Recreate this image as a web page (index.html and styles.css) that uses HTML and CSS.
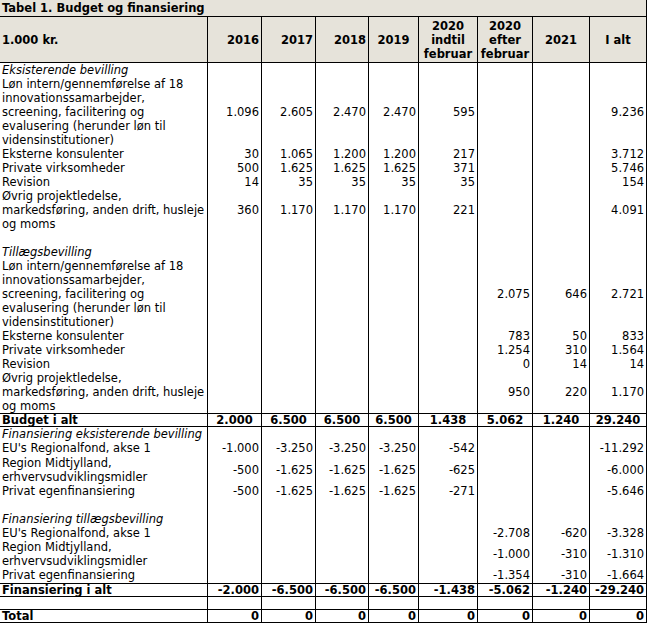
FILE: index.html
```html
<!DOCTYPE html>
<html lang="da">
<head>
<meta charset="utf-8">
<title>Tabel 1. Budget og finansiering</title>
<link rel="stylesheet" href="styles.css">
</head>
<body>
<table class="budget">
  <colgroup>
    <col class="w-label">
    <col class="w-54">
    <col class="w-54">
    <col class="w-53">
    <col class="w-50">
    <col class="w-59">
    <col class="w-55">
    <col class="w-57">
    <col class="w-57">
  </colgroup>
  <thead>
    <tr class="title-row">
      <th colspan="9" class="title">Tabel 1. Budget og finansiering</th>
    </tr>
    <tr class="head-row">
      <th class="lbl">1.000 kr.</th>
      <th class="r">2016</th>
      <th class="r">2017</th>
      <th class="r">2018</th>
      <th class="c">2019</th>
      <th class="c">2020<br>indtil<br>februar</th>
      <th class="c">2020<br>efter<br>februar</th>
      <th class="c">2021</th>
      <th class="c">I alt</th>
    </tr>
  </thead>
  <tbody>
    <tr>
      <td class="lbl it">Eksisterende bevilling</td>
      <td></td><td></td><td></td><td></td><td></td><td></td><td></td><td></td>
    </tr>
    <tr>
      <td class="lbl">Løn intern/gennemførelse af 18<br>innovationssamarbejder,<br>screening, facilitering og<br>evalusering (herunder løn til<br>vidensinstitutioner)</td>
      <td class="n">1.096</td><td class="n">2.605</td><td class="n">2.470</td><td class="n">2.470</td><td class="n">595</td><td></td><td></td><td class="n">9.236</td>
    </tr>
    <tr>
      <td class="lbl">Eksterne konsulenter</td>
      <td class="n">30</td><td class="n">1.065</td><td class="n">1.200</td><td class="n">1.200</td><td class="n">217</td><td></td><td></td><td class="n">3.712</td>
    </tr>
    <tr>
      <td class="lbl">Private virksomheder</td>
      <td class="n">500</td><td class="n">1.625</td><td class="n">1.625</td><td class="n">1.625</td><td class="n">371</td><td></td><td></td><td class="n">5.746</td>
    </tr>
    <tr>
      <td class="lbl">Revision</td>
      <td class="n">14</td><td class="n">35</td><td class="n">35</td><td class="n">35</td><td class="n">35</td><td></td><td></td><td class="n">154</td>
    </tr>
    <tr>
      <td class="lbl">Øvrig projektledelse,<br>markedsføring, anden drift, husleje<br>og moms</td>
      <td class="n">360</td><td class="n">1.170</td><td class="n">1.170</td><td class="n">1.170</td><td class="n">221</td><td></td><td></td><td class="n">4.091</td>
    </tr>
    <tr>
      <td class="lbl">&nbsp;</td>
      <td></td><td></td><td></td><td></td><td></td><td></td><td></td><td></td>
    </tr>
    <tr>
      <td class="lbl it">Tillægsbevilling</td>
      <td></td><td></td><td></td><td></td><td></td><td></td><td></td><td></td>
    </tr>
    <tr>
      <td class="lbl">Løn intern/gennemførelse af 18<br>innovationssamarbejder,<br>screening, facilitering og<br>evalusering (herunder løn til<br>vidensinstitutioner)</td>
      <td></td><td></td><td></td><td></td><td></td><td class="n">2.075</td><td class="n">646</td><td class="n">2.721</td>
    </tr>
    <tr>
      <td class="lbl">Eksterne konsulenter</td>
      <td></td><td></td><td></td><td></td><td></td><td class="n">783</td><td class="n">50</td><td class="n">833</td>
    </tr>
    <tr>
      <td class="lbl">Private virksomheder</td>
      <td></td><td></td><td></td><td></td><td></td><td class="n">1.254</td><td class="n">310</td><td class="n">1.564</td>
    </tr>
    <tr>
      <td class="lbl">Revision</td>
      <td></td><td></td><td></td><td></td><td></td><td class="n">0</td><td class="n">14</td><td class="n">14</td>
    </tr>
    <tr class="rule">
      <td class="lbl">Øvrig projektledelse,<br>markedsføring, anden drift, husleje<br>og moms</td>
      <td></td><td></td><td></td><td></td><td></td><td class="n">950</td><td class="n">220</td><td class="n">1.170</td>
    </tr>
    <tr class="rule total budget-total">
      <td class="lbl">Budget i alt</td>
      <td class="c">2.000</td><td class="c">6.500</td><td class="c">6.500</td><td class="c">6.500</td><td class="c">1.438</td><td class="c">5.062</td><td class="c">1.240</td><td class="c">29.240</td>
    </tr>
    <tr>
      <td class="lbl it">Finansiering eksisterende bevilling</td>
      <td></td><td></td><td></td><td></td><td></td><td></td><td></td><td></td>
    </tr>
    <tr class="tall">
      <td class="lbl">EU's Regionalfond, akse 1</td>
      <td class="n">-1.000</td><td class="n">-3.250</td><td class="n">-3.250</td><td class="n">-3.250</td><td class="n">-542</td><td></td><td></td><td class="n">-11.292</td>
    </tr>
    <tr>
      <td class="lbl">Region Midtjylland,<br>erhvervsudviklingsmidler</td>
      <td class="n">-500</td><td class="n">-1.625</td><td class="n">-1.625</td><td class="n">-1.625</td><td class="n">-625</td><td></td><td></td><td class="n">-6.000</td>
    </tr>
    <tr>
      <td class="lbl">Privat egenfinansiering</td>
      <td class="n">-500</td><td class="n">-1.625</td><td class="n">-1.625</td><td class="n">-1.625</td><td class="n">-271</td><td></td><td></td><td class="n">-5.646</td>
    </tr>
    <tr>
      <td class="lbl">&nbsp;</td>
      <td></td><td></td><td></td><td></td><td></td><td></td><td></td><td></td>
    </tr>
    <tr>
      <td class="lbl it">Finansiering tillægsbevilling</td>
      <td></td><td></td><td></td><td></td><td></td><td></td><td></td><td></td>
    </tr>
    <tr>
      <td class="lbl">EU's Regionalfond, akse 1</td>
      <td></td><td></td><td></td><td></td><td></td><td class="n">-2.708</td><td class="n">-620</td><td class="n">-3.328</td>
    </tr>
    <tr>
      <td class="lbl">Region Midtjylland,<br>erhvervsudviklingsmidler</td>
      <td></td><td></td><td></td><td></td><td></td><td class="n">-1.000</td><td class="n">-310</td><td class="n">-1.310</td>
    </tr>
    <tr class="rule tall">
      <td class="lbl">Privat egenfinansiering</td>
      <td></td><td></td><td></td><td></td><td></td><td class="n">-1.354</td><td class="n">-310</td><td class="n">-1.664</td>
    </tr>
    <tr class="rule total">
      <td class="lbl">Finansiering i alt</td>
      <td class="n">-2.000</td><td class="n">-6.500</td><td class="n">-6.500</td><td class="n">-6.500</td><td class="n">-1.438</td><td class="n">-5.062</td><td class="n">-1.240</td><td class="n">-29.240</td>
    </tr>
    <tr class="rule total">
      <td class="lbl">&nbsp;</td>
      <td></td><td></td><td></td><td></td><td></td><td></td><td></td><td></td>
    </tr>
    <tr class="rule total">
      <td class="lbl">Total</td>
      <td class="n">0</td><td class="n">0</td><td class="n">0</td><td class="n">0</td><td class="n">0</td><td class="n">0</td><td class="n">0</td><td class="n">0</td>
    </tr>
  </tbody>
</table>
</body>
</html>
```

FILE: styles.css
```css
html, body {
  margin: 0;
  padding: 0;
  background: #ffffff;
}

body {
  font-family: "DejaVu Sans", Verdana, sans-serif;
  font-size: 11.5px;
  color: #000000;
}

.budget {
  table-layout: fixed;
  border-collapse: separate;
  border-spacing: 0;
  width: 647px;
}

.w-label { width: 208px; }
.w-54 { width: 54px; }
.w-53 { width: 53px; }
.w-50 { width: 50px; }
.w-59 { width: 59px; }
.w-55 { width: 55px; }
.w-57 { width: 57px; }

.budget th,
.budget td {
  box-sizing: border-box;
  padding: 0 2px;
  border-right: 1px solid #000;
  line-height: 14px;
  vertical-align: middle;
  white-space: nowrap;
  overflow: visible;
}

.budget th {
  background: #e6e3da;
  font-weight: bold;
}

.title-row .title {
  text-align: left;
  line-height: 16px;
  border-bottom: 1px solid #000;
  padding-left: 2px;
}

.head-row th {
  padding-top: 2px;
  padding-bottom: 1px;
  border-bottom: 1px solid #000;
}

.lbl { text-align: left; }
.r { text-align: right; }
.c { text-align: center; }
.n { text-align: right; }
.it { font-style: italic; }

.rule td {
  border-bottom: 1px solid #000;
}

.tall td {
  padding-bottom: 1px;
}

.total td {
  font-weight: bold;
  line-height: 12px;
}
```
